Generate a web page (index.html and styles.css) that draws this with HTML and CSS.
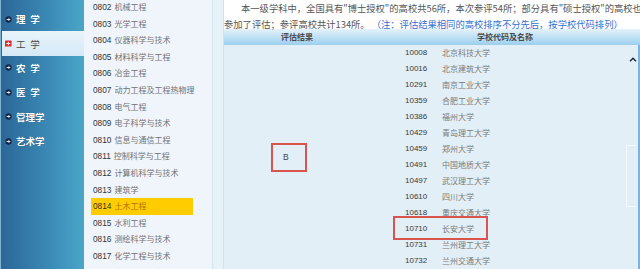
FILE: index.html
```html
<!DOCTYPE html>
<html lang="zh-CN">
<head>
    <meta charset="UTF-8">
    <meta name="viewport" content="width=device-width, initial-scale=1.0">
    <title>学科评估结果</title>
    <link rel="stylesheet" href="styles.css">
</head>
<body>

    <div class="page">
        <nav class="sidebar">
            <a class="cat"><svg class="ico" viewBox="0 0 8 8"><circle cx="4" cy="4" r="3.6" fill="#15284a"/><path d="M1.8 4h3.6M4 2.5l1.5 1.5-1.5 1.5" stroke="#fff" stroke-width="1" fill="none"/></svg>理&ensp;学</a>
            <a class="cat active"><svg class="ico" viewBox="0 0 8 8"><rect x="0" y="0.5" width="7.5" height="7" rx="1" fill="#e2262c"/><path d="M1.6 4h4.4M3.8 2v4" stroke="#fff" stroke-width="1.1"/></svg>工&ensp;学</a>
            <a class="cat"><svg class="ico" viewBox="0 0 8 8"><circle cx="4" cy="4" r="3.6" fill="#15284a"/><path d="M1.8 4h3.6M4 2.5l1.5 1.5-1.5 1.5" stroke="#fff" stroke-width="1" fill="none"/></svg>农&ensp;学</a>
            <a class="cat"><svg class="ico" viewBox="0 0 8 8"><circle cx="4" cy="4" r="3.6" fill="#15284a"/><path d="M1.8 4h3.6M4 2.5l1.5 1.5-1.5 1.5" stroke="#fff" stroke-width="1" fill="none"/></svg>医&ensp;学</a>
            <a class="cat"><svg class="ico" viewBox="0 0 8 8"><circle cx="4" cy="4" r="3.6" fill="#15284a"/><path d="M1.8 4h3.6M4 2.5l1.5 1.5-1.5 1.5" stroke="#fff" stroke-width="1" fill="none"/></svg>管理学</a>
            <a class="cat"><svg class="ico" viewBox="0 0 8 8"><circle cx="4" cy="4" r="3.6" fill="#15284a"/><path d="M1.8 4h3.6M4 2.5l1.5 1.5-1.5 1.5" stroke="#fff" stroke-width="1" fill="none"/></svg>艺术学</a>
        </nav>

        <ul class="majors">
            <li><b>0802</b>机械工程</li>
            <li><b>0803</b>光学工程</li>
            <li><b>0804</b>仪器科学与技术</li>
            <li><b>0805</b>材料科学与工程</li>
            <li><b>0806</b>冶金工程</li>
            <li><b>0807</b>动力工程及工程热物理</li>
            <li><b>0808</b>电气工程</li>
            <li><b>0809</b>电子科学与技术</li>
            <li><b>0810</b>信息与通信工程</li>
            <li><b>0811</b>控制科学与工程</li>
            <li><b>0812</b>计算机科学与技术</li>
            <li><b>0813</b>建筑学</li>
            <li class="current"><b>0814</b>土木工程</li>
            <li><b>0815</b>水利工程</li>
            <li><b>0816</b>测绘科学与技术</li>
            <li><b>0817</b>化学工程与技术</li>
            <li><b>0818</b>地质资源与地质工程</li>
        </ul>

        <div class="gutter"></div>

        <main class="content">
            <p class="intro">
                <span class="line first">本一级学科中，全国具有"博士授权"的高校共56所，本次参评54所；部分具有"硕士授权"的高校也参加了评估；</span>
                <span class="line">参加了评估；参评高校共计134所。 <span class="note">（注：评估结果相同的高校排序不分先后，按学校代码排列）</span></span>
            </p>

            <div class="thead">
                <div>评估结果</div>
                <div>学校代码及名称</div>
            </div>

            <div class="tbody">
                <div class="grade"><span class="mark">B</span></div>
                <div class="schools">
                    <div class="row"><span class="code">10008</span><span>北京科技大学</span></div>
                    <div class="row"><span class="code">10016</span><span>北京建筑大学</span></div>
                    <div class="row"><span class="code">10291</span><span>南京工业大学</span></div>
                    <div class="row"><span class="code">10359</span><span>合肥工业大学</span></div>
                    <div class="row"><span class="code">10386</span><span>福州大学</span></div>
                    <div class="row"><span class="code">10429</span><span>青岛理工大学</span></div>
                    <div class="row"><span class="code">10459</span><span>郑州大学</span></div>
                    <div class="row"><span class="code">10491</span><span>中国地质大学</span></div>
                    <div class="row"><span class="code">10497</span><span>武汉理工大学</span></div>
                    <div class="row"><span class="code">10610</span><span>四川大学</span></div>
                    <div class="row"><span class="code">10618</span><span>重庆交通大学</span></div>
                    <div class="row marked"><span class="code">10710</span><span>长安大学</span></div>
                    <div class="row"><span class="code">10731</span><span>兰州理工大学</span></div>
                    <div class="row"><span class="code">10732</span><span>兰州交通大学</span></div>
                </div>
                <div class="scroll">
                    <svg class="up" viewBox="0 0 8 5"><path d="M1 4.2L4 1.2l3 3" stroke="#1d2a3f" stroke-width="1.5" fill="none"/></svg>
                    <div class="thumb"></div>
                </div>
            </div>
        </main>
    </div>

</body>
</html>
```

FILE: styles.css
```css
/* General */
body {
    margin: 0;
    width: 640px;
    height: 269px;
    overflow: hidden;
    background-color: #fff;
    font-family: "Liberation Sans", "Noto Sans CJK SC", sans-serif;
}

.page {
    display: flex;
    height: 269px;
}

/* Category sidebar */
.sidebar {
    width: 84px;
    flex: none;
    box-sizing: border-box;
    padding-top: 7px;
    border-left: 1px solid #7fb3d3;
    background: linear-gradient(90deg, #2b6797 0%, #3a88b5 55%, #4aa6c8 100%);
}

.cat {
    display: flex;
    align-items: center;
    gap: 4px;
    height: 24.4px;
    padding-left: 4px;
    color: #fff;
    font-family: "Noto Sans CJK SC", sans-serif;
    font-size: 9.5px;
    font-weight: bold;
    text-shadow: 0 0 1px rgba(0, 0, 0, 0.35);
    white-space: nowrap;
}

.cat .ico {
    width: 7px;
    height: 7px;
    flex: none;
}

.cat.active {
    margin-left: 1px;
    padding-left: 3px;
    background: linear-gradient(#e8f4fb, #d4e9f6);
    color: #4a4a4a;
    font-weight: normal;
    text-shadow: none;
}

/* Major list */
.majors {
    width: 128px;
    flex: none;
    margin: 0;
    padding: 0;
    list-style: none;
    background-color: #eff5fb;
    border-right: 1px solid #d3e3ef;
    overflow: hidden;
}

.majors li {
    width: 100px;
    height: 16.6px;
    margin-left: 7px;
    padding-left: 2px;
    line-height: 16.6px;
    font-size: 8px;
    color: #727272;
    white-space: nowrap;
}

.majors li:first-child {
    margin-top: -1px;
}

.majors li b {
    font-weight: normal;
    font-size: 8.3px;
    color: #333;
    margin-right: 3px;
}

.majors li.current {
    background-color: #ffcc00;
    color: #b07612;
}

.gutter {
    width: 10px;
    flex: none;
    background-color: #e7f1f8;
    border-right: 1px solid #d0e1ee;
}

/* Content */
.content {
    flex: 1;
    min-width: 0;
    overflow: hidden;
}

.intro {
    margin: 0;
    height: 29px;
    font-family: "Noto Sans CJK SC", sans-serif;
    font-size: 9.3px;
    line-height: 16px;
    color: #555;
    white-space: nowrap;
}

.intro .line {
    display: block;
}

.intro .first {
    text-indent: 17px;
}

.note {
    color: #3270d2;
}

/* Result table */
.thead {
    display: grid;
    grid-template-columns: 146px 1fr;
    height: 16px;
    line-height: 16px;
    background: linear-gradient(#e4f2fb, #9ccfee);
    font-family: "Noto Sans CJK SC", sans-serif;
    font-size: 8px;
    font-weight: bold;
    color: #4a4a4a;
    text-align: center;
}

.tbody {
    display: grid;
    grid-template-columns: 146px 256px 14px;
    height: 224px;
    background-color: #e2eff7;
}

.grade {
    display: flex;
    align-items: center;
    padding-left: 47px;
}

.mark {
    display: flex;
    align-items: center;
    box-sizing: border-box;
    width: 36px;
    height: 29px;
    padding-left: 10px;
    border: 2px solid #d9544f;
    font-size: 8.5px;
    color: #444;
}

.row {
    position: relative;
    display: grid;
    grid-template-columns: 37px 1fr;
    height: 16px;
    padding-left: 35px;
    line-height: 16px;
    font-size: 8px;
    color: #7a7a7a;
    font-family: "Noto Sans CJK SC", sans-serif;
}

.row .code {
    font-family: "Liberation Sans", sans-serif;
    color: #3a3a3a;
}

.row.marked::after {
    content: "";
    position: absolute;
    left: 23px;
    top: -5px;
    width: 95px;
    height: 24px;
    box-sizing: border-box;
    border: 2px solid #d9544f;
}

/* Scrollbar */
.scroll {
    border-right: 2px solid #7cb2e0;
}

.scroll .up {
    display: block;
    width: 8px;
    height: 5px;
    margin: 12px 0 0 3px;
}

.scroll .thumb {
    width: 9px;
    height: 60px;
    margin-top: 83px;
    border: 1px solid #f4f9fc;
    border-right: none;
}
```
